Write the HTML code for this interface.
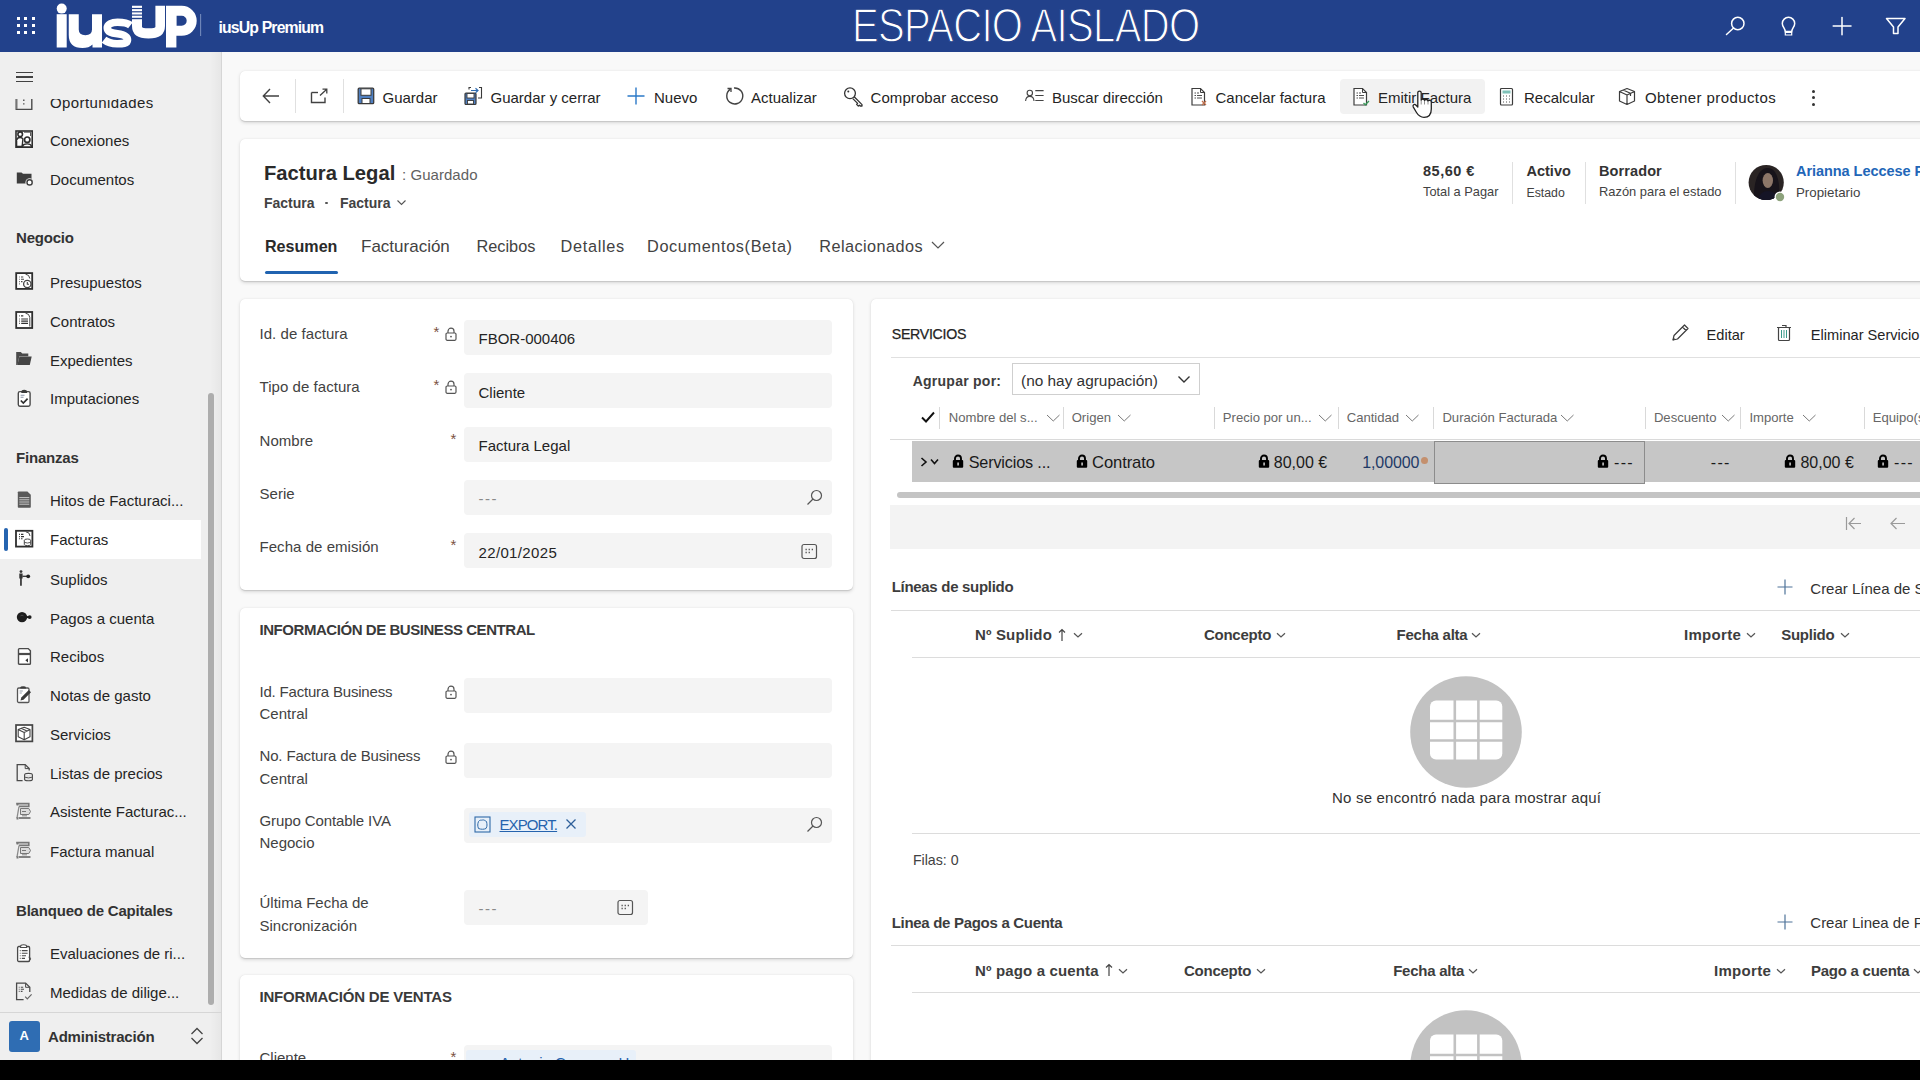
<!DOCTYPE html><html><head><meta charset="utf-8"><style>
*{box-sizing:border-box;margin:0;padding:0}
html,body{width:1920px;height:1080px;overflow:hidden;background:#000;font-family:"Liberation Sans",sans-serif}
#app{position:absolute;left:0;top:0;width:1920px;height:1060px;background:#f9f9f9;overflow:hidden}
.t{position:absolute;white-space:nowrap;line-height:1}
.r{position:absolute}
.s{position:absolute;overflow:visible}
.card{position:absolute;background:#fff;border-radius:5px;box-shadow:0 1.6px 3.6px rgba(0,0,0,.13),0 0.3px 0.9px rgba(0,0,0,.11)}
</style></head><body><div id="app"><div class="r" style="left:0px;top:0px;width:1920px;height:52px;background:#22418b;"></div>
<div class="r" style="left:17.0px;top:17.0px;width:3.2px;height:3.2px;background:#fff;"></div>
<div class="r" style="left:17.0px;top:24.0px;width:3.2px;height:3.2px;background:#fff;"></div>
<div class="r" style="left:17.0px;top:31.0px;width:3.2px;height:3.2px;background:#fff;"></div>
<div class="r" style="left:24.3px;top:17.0px;width:3.2px;height:3.2px;background:#fff;"></div>
<div class="r" style="left:24.3px;top:24.0px;width:3.2px;height:3.2px;background:#fff;"></div>
<div class="r" style="left:24.3px;top:31.0px;width:3.2px;height:3.2px;background:#fff;"></div>
<div class="r" style="left:31.6px;top:17.0px;width:3.2px;height:3.2px;background:#fff;"></div>
<div class="r" style="left:31.6px;top:24.0px;width:3.2px;height:3.2px;background:#fff;"></div>
<div class="r" style="left:31.6px;top:31.0px;width:3.2px;height:3.2px;background:#fff;"></div>
<svg class="s" style="left:50px;top:0px;" width="160" height="52" viewBox="0 0 160 52">
<g transform="translate(-50,0)" fill="#fff">
<rect x="56.7" y="14.2" width="10" height="33.3"/>
<circle cx="61.7" cy="8.6" r="5"/>
<path d="M68.75 14.2H78.75V29.5Q78.75 35.2 85.4 35.2Q92 35.2 92 29.5V14.2H102V47.5H92.5V44.5Q89 48 82.5 48Q68.75 48 68.75 35Z"/>
<path d="M130.5 25.3C127 22.5 122 22.3 117.5 22.3C111.5 22.3 107.3 24.3 107.3 28C107.3 32 111.5 33 117.5 33.8C123.5 34.6 127.5 36 127.5 40C127.5 43.8 122 43.7 117 43.7C112 43.7 107.5 42.5 104 39.8" fill="none" stroke="#fff" stroke-width="7.6"/>
<path d="M132 5.8H142V27Q142 28.3 148.7 28.3Q155.4 28.3 155.4 27V5.8H165V26Q165 38.5 148.5 38.5Q132 38.5 132 26Z"/>
<path fill-rule="evenodd" d="M166 5.8H181.7A15 15 0 0 1 181.7 35.8H176.4V47.5H166ZM176.6 15.8V25.8H181.7A5 5 0 0 0 181.7 15.8Z"/>
</g>
<g transform="translate(-50,0)" fill="#22418b">
<rect x="132" y="7.9" width="10" height="1.2"/>
<rect x="132" y="11.2" width="10" height="1.2"/>
<rect x="132" y="14.5" width="10" height="1.2"/>
<rect x="132" y="17.8" width="10" height="1.4"/>
</g>
<rect x="150.3" y="14" width="0.8" height="22" fill="#8fa3cc"/>
</svg>
<div class="t " style="left:218.5px;top:19.9px;font-size:15.8px;font-weight:700;color:#fff;letter-spacing:-0.85px;">iusUp Premium</div>
<div class="t " style="left:851.5px;top:1.0px;font-size:48.5px;color:#fff;letter-spacing:-0.8px;transform-origin:0 0;transform:scaleX(0.825);-webkit-text-stroke:1.3px #22418b;">ESPACIO AISLADO</div>
<svg class="s" style="left:1720px;top:12px;" width="200" height="30" viewBox="0 0 200 30">
<g transform="translate(-1720,-12)" fill="none" stroke="#fff" stroke-width="1.5" stroke-linecap="round">
<circle cx="1737.8" cy="23.5" r="6.2"/>
<line x1="1733.3" y1="28.3" x2="1726.5" y2="34.5"/>
<path d="M1785.2 31.5C1785.2 28.5 1782.3 26.8 1782.3 23.5A6.2 6.2 0 0 1 1794.7 23.5C1794.7 26.8 1791.8 28.5 1791.8 31.5Z"/>
<path d="M1785.3 32.5H1791.7V35H1785.3Z" stroke-width="1.2"/>
<line x1="1842" y1="17.5" x2="1842" y2="34.8"/>
<line x1="1833.2" y1="26" x2="1851" y2="26"/>
<path d="M1886.5 18.5H1905L1898 27V33.5H1893.5V27Z" stroke-linejoin="round"/>
</g>
</svg>
<div class="r" style="left:0px;top:52px;width:221px;height:1008px;background:#efefef;"></div>
<div class="r" style="left:210px;top:52px;width:11px;height:1008px;background:linear-gradient(to right, rgba(0,0,0,0), rgba(0,0,0,.035));"></div>
<div class="r" style="left:221px;top:52px;width:1px;height:1008px;background:#d6d6d6;"></div>
<div class="r" style="left:15.5px;top:72.0px;width:17.5px;height:1.3px;background:#424242;"></div>
<div class="r" style="left:15.5px;top:76.3px;width:17.5px;height:1.3px;background:#424242;"></div>
<div class="r" style="left:15.5px;top:80.6px;width:17.5px;height:1.3px;background:#424242;"></div>
<div class="r" style="left:0px;top:520px;width:201px;height:39px;background:#ffffff;"></div>
<div class="r" style="left:4px;top:527.5px;width:4px;height:23.5px;background:#2564b0;border-radius:2px;"></div>
<div style="position:absolute;left:0;top:99.2px;width:205px;height:912.8px;overflow:hidden">
<div class="t " style="left:50.0px;top:-4.7px;font-size:15px;color:#242424;letter-spacing:0.4px;">Oportunidades</div>
<svg class="s" style="left:15px;top:0.2999999999999936px;" width="18" height="18" viewBox="0 0 18 18"><path d="M1.2 0V10.4H16.8V0" fill="none" stroke="#4a4a4a" stroke-width="1.4"/><path d="M1.8 0V10" stroke="#777" stroke-width="1.4"/><path d="M8.8 0.6V2M8.8 4.2V5.6" stroke="#444" stroke-width="1.3"/></svg>
<div class="t " style="left:50.0px;top:34.3px;font-size:15px;color:#242424;">Conexiones</div>
<svg class="s" style="left:15px;top:31.30000000000001px;" width="18" height="18" viewBox="0 0 18 18"><rect x="1" y="1" width="16.2" height="16.2" fill="#fff" stroke="#2e2e2e" stroke-width="1.6"/><path d="M1 9.5Q1.5 6.8 5 6.8Q7.5 6.8 8.6 8.5L7.8 17H1Z" fill="#2e2e2e"/><path d="M2.3 15.8V10.2Q3 8.2 5 8.2Q6.5 8.2 7.2 9.2L6.5 15.8Z" fill="#fff"/><circle cx="5.2" cy="4.2" r="2.3" fill="#fff" stroke="#2e2e2e" stroke-width="1.6"/><path d="M6.2 17.2Q6.8 13.2 12.2 13.2Q17.2 13.2 17.2 17.2Z" fill="#2e2e2e"/><path d="M8.2 16.2Q9 14.6 12.2 14.6Q15.2 14.6 15.8 16.2Z" fill="#fff"/><circle cx="12.2" cy="9.7" r="2.7" fill="#fff" stroke="#2e2e2e" stroke-width="1.7"/><path d="M9 2.2H15.5V6" fill="none" stroke="#2e2e2e" stroke-width=".8"/></svg>
<div class="t " style="left:50.0px;top:73.3px;font-size:15px;color:#242424;">Documentos</div>
<svg class="s" style="left:15px;top:70.19999999999999px;" width="18" height="18" viewBox="0 0 18 18"><path d="M1.8 3.6H6.5L8 4.8H16.5V14.6H1.8Z" fill="#3d3d3d"/><circle cx="14.6" cy="13.4" r="4.2" fill="#efefef"/><circle cx="14.6" cy="13.4" r="2.6" fill="#fff" stroke="#3d3d3d" stroke-width="1.4"/></svg>
<div class="t " style="left:16.0px;top:131.3px;font-size:15px;font-weight:700;color:#333;letter-spacing:-0.2px;">Negocio</div>
<div class="t " style="left:50.0px;top:176.3px;font-size:15px;color:#242424;">Presupuestos</div>
<svg class="s" style="left:15px;top:173.0px;" width="18" height="18" viewBox="0 0 18 18"><rect x="1.2" y="1.1" width="16" height="15.8" fill="#fff" stroke="#2e2e2e" stroke-width="1.8"/><path d="M4.3 5H5M4.3 7.3H5M4.3 9.6H5M4.3 11.9H5M6 5H8.3M6 7.3H9M6 9.6H7.5" stroke="#444" stroke-width="1.1"/><path d="M10.5 2.2Q14.5 2.5 14.8 6.5" fill="none" stroke="#444" stroke-width="1"/><circle cx="12.3" cy="12" r="3.7" fill="#fff" stroke="#444" stroke-width="1.3"/><path d="M12.3 10V12.2H14" fill="none" stroke="#444" stroke-width="1.1"/></svg>
<div class="t " style="left:50.0px;top:215.3px;font-size:15px;color:#242424;">Contratos</div>
<svg class="s" style="left:15px;top:212.0px;" width="18" height="18" viewBox="0 0 18 18"><rect x="1.2" y="1" width="16" height="16" fill="#fff" stroke="#2e2e2e" stroke-width="1.8"/><path d="M4.3 4.8H5M6 4.8H8.3M4.3 8H5M4.3 10.2H5M4.3 12.4H5M6.2 8H13M6.2 10.2H13M6.2 12.4H13" stroke="#333" stroke-width="1.2"/><path d="M10.5 2.2Q14.5 2.5 14.8 6.5V15.5" fill="none" stroke="#444" stroke-width="1"/></svg>
<div class="t " style="left:50.0px;top:254.3px;font-size:15px;color:#242424;">Expedientes</div>
<svg class="s" style="left:15px;top:250.8px;" width="18" height="18" viewBox="0 0 18 18"><path d="M1.2 2.1H5.8L7.3 3.5H13.3V6.2H4.3L2.6 15.1H1.2Z" fill="#4a4a4a"/><path d="M4.4 6.5H16.7L14.8 15.1H2.4Z" fill="#454545"/></svg>
<div class="t " style="left:50.0px;top:292.3px;font-size:15px;color:#242424;">Imputaciones</div>
<svg class="s" style="left:15px;top:289.5px;" width="18" height="18" viewBox="0 0 18 18"><rect x="3.3" y="2.6" width="11.8" height="14.6" rx="1.6" fill="#fff" stroke="#4a4a4a" stroke-width="1.4"/><path d="M6.3 4V2.8Q6.3 0.8 9.2 0.8Q12.1 0.8 12.1 2.8V4Z" fill="#3a3a3a"/><path d="M5.6 6.3H9.5M5.6 8.2H8.5" stroke="#8d97aa" stroke-width="1.1"/><path d="M5.8 11.5L8.3 14L12.6 9.6" fill="none" stroke="#2e2e2e" stroke-width="1.7"/></svg>
<div class="t " style="left:16.0px;top:351.3px;font-size:15px;font-weight:700;color:#333;letter-spacing:-0.2px;">Finanzas</div>
<div class="t " style="left:50.0px;top:394.3px;font-size:15px;color:#242424;">Hitos de Facturaci...</div>
<svg class="s" style="left:15px;top:391.3px;" width="18" height="18" viewBox="0 0 18 18"><path d="M2.8 2.2Q2.8 1.4 3.6 1.4H12.4L15.8 4.8V16.9Q15.8 17.7 15 17.7H3.6Q2.8 17.7 2.8 16.9Z" fill="#5a5a5a"/><path d="M4.3 7.6H14.3M4.3 9.8H14.3M4.3 12H14.3M4.3 14.2H14.3" stroke="#c8c8c8" stroke-width="1"/></svg>
<div class="t " style="left:50.0px;top:433.3px;font-size:15px;color:#242424;">Facturas</div>
<svg class="s" style="left:15px;top:430.20000000000005px;" width="18" height="18" viewBox="0 0 18 18"><rect x="1" y="1.8" width="16.4" height="15.8" fill="#fff" stroke="#2e2e2e" stroke-width="1.8"/><path d="M4 5.4H4.9M4 7.6H4.9M4 9.8H4.9M6 5.4H8.4M6 7.6H9M6 9.8H7.5" stroke="#333" stroke-width="1.1"/><path d="M10.8 2.8Q14.8 3 15 7" fill="none" stroke="#444" stroke-width="1"/><ellipse cx="12.5" cy="11.3" rx="3.2" ry="1.3" fill="#fff" stroke="#444" stroke-width="1"/><path d="M9.3 11.3V15.4Q9.3 16.6 12.5 16.6Q15.7 16.6 15.7 15.4V11.3" fill="#fff" stroke="#444" stroke-width="1"/><path d="M9.5 13.4Q12.5 14.6 15.5 13.4" fill="none" stroke="#444" stroke-width=".9"/></svg>
<div class="t " style="left:50.0px;top:473.3px;font-size:15px;color:#242424;">Suplidos</div>
<svg class="s" style="left:15px;top:470.0px;" width="18" height="18" viewBox="0 0 18 18"><circle cx="6" cy="2.6" r="1.4" fill="#333"/><path d="M4.3 4.6H7.6V9.5H6.8V16.8H5.1V9.5H4.3Z" fill="#333"/><path d="M7.4 7.3H12" stroke="#333" stroke-width="1.3"/><circle cx="13.2" cy="7.3" r="1.9" fill="#222"/></svg>
<div class="t " style="left:50.0px;top:512.3px;font-size:15px;color:#242424;">Pagos a cuenta</div>
<svg class="s" style="left:15px;top:508.79999999999995px;" width="18" height="18" viewBox="0 0 18 18"><circle cx="7" cy="9.1" r="5.2" fill="#1e1e1e"/><rect x="10" y="8.1" width="4" height="2" fill="#1e1e1e"/><circle cx="14.7" cy="9.1" r="1.9" fill="#1e1e1e"/><path d="M5.5 7.8Q7 6.5 8.5 7.8" fill="none" stroke="#555" stroke-width=".8"/></svg>
<div class="t " style="left:50.0px;top:550.3px;font-size:15px;color:#242424;">Recibos</div>
<svg class="s" style="left:15px;top:547.5px;" width="18" height="18" viewBox="0 0 18 18"><path d="M3.5 2.5Q3.5 1.6 4.4 1.6H13.2L15.4 3.8V16.4Q15.4 17.2 14.5 17.2H4.4Q3.5 17.2 3.5 16.4Z" fill="#fff" stroke="#4a4a4a" stroke-width="1.4"/><path d="M3.8 7H15.2" stroke="#4a4a4a" stroke-width="2.2"/><path d="M13 11.2L10.3 13.3L13 15.4Z" fill="#333"/></svg>
<div class="t " style="left:50.0px;top:589.3px;font-size:15px;color:#242424;">Notas de gasto</div>
<svg class="s" style="left:15px;top:586.3px;" width="18" height="18" viewBox="0 0 18 18"><rect x="2.5" y="3" width="11.5" height="14.5" rx="1.3" fill="#fff" stroke="#555" stroke-width="1.3"/><path d="M5.3 3.6V2.6Q5.3 1.2 8.2 1.2Q11 1.2 11 2.6V3.6Z" fill="#3a3a3a"/><path d="M4.6 6H7.8M4.6 8H6.8" stroke="#9aa1ad" stroke-width="1.1"/><path d="M5.5 15.5L6.3 12.5L13.8 5L16 7.2L8.5 14.7Z" fill="#3a3a3a"/></svg>
<div class="t " style="left:50.0px;top:628.3px;font-size:15px;color:#242424;">Servicios</div>
<svg class="s" style="left:15px;top:625.0px;" width="18" height="18" viewBox="0 0 18 18"><rect x="1" y="1" width="16.4" height="16.4" fill="#fff" stroke="#444" stroke-width="1.7"/><path d="M9.2 3.2L15 5.6V12.8L9.2 15.8L3.2 12.8V5.6Z M3.2 5.6L9.2 8.4L15 5.6 M9.2 8.4V15.8 M6 4.2L12 7" fill="none" stroke="#444" stroke-width="1.1" stroke-linejoin="round"/></svg>
<div class="t " style="left:50.0px;top:667.3px;font-size:15px;color:#242424;">Listas de precios</div>
<svg class="s" style="left:15px;top:663.8px;" width="18" height="18" viewBox="0 0 18 18"><path d="M7.6 17.6H2.2V1.6H10.2L14.2 5.6V7.6" fill="none" stroke="#4a4a4a" stroke-width="1.3"/><path d="M10.2 1.8V5.6H14" fill="none" stroke="#4a4a4a" stroke-width="1"/><ellipse cx="13.5" cy="12" rx="3.9" ry="1.6" fill="#fff" stroke="#4a4a4a" stroke-width="1.1"/><path d="M9.6 12V16.5Q9.6 17.8 13.5 17.8Q17.4 17.8 17.4 16.5V12" fill="#e4e4e4" stroke="#4a4a4a" stroke-width="1.1"/><path d="M9.8 14.2Q13.5 15.6 17.2 14.2" fill="none" stroke="#4a4a4a" stroke-width=".9"/></svg>
<div class="t " style="left:50.0px;top:705.3px;font-size:15px;color:#242424;">Asistente Facturac...</div>
<svg class="s" style="left:15px;top:702.5px;" width="18" height="18" viewBox="0 0 18 18"><path d="M1.2 1.6H13.8V4.4H4" fill="none" stroke="#777" stroke-width="1.6"/><path d="M1.5 1.5H3.5V3.5H1.5Z M1.5 15H3.5V17.5H1.5Z" fill="#777"/><path d="M4 4.5L2 16" fill="none" stroke="#8a8a8a" stroke-width="1.3"/><path d="M5.5 6.5H13.8L15.5 9.5L13.8 12.5H5.5Z" fill="#ddd" stroke="#777" stroke-width="1"/><path d="M7 9.5H11" stroke="#777" stroke-width="1"/><path d="M4 16H15.5" stroke="#777" stroke-width="1.8"/><path d="M7 13.8H12" stroke="#888" stroke-width="1"/></svg>
<div class="t " style="left:50.0px;top:745.3px;font-size:15px;color:#242424;">Factura manual</div>
<svg class="s" style="left:15px;top:742.0px;" width="18" height="18" viewBox="0 0 18 18"><path d="M1.2 1.6H13.8V4.4H4" fill="none" stroke="#777" stroke-width="1.6"/><path d="M1.5 1.5H3.5V3.5H1.5Z M1.5 15H3.5V17.5H1.5Z" fill="#777"/><path d="M4 4.5L2 16" fill="none" stroke="#8a8a8a" stroke-width="1.3"/><path d="M5.5 6.5H13.8L15.5 9.5L13.8 12.5H5.5Z" fill="#ddd" stroke="#777" stroke-width="1"/><path d="M7 9.5H11" stroke="#777" stroke-width="1"/><path d="M4 16H15.5" stroke="#777" stroke-width="1.8"/><path d="M7 13.8H12" stroke="#888" stroke-width="1"/></svg>
<div class="t " style="left:16.0px;top:804.3px;font-size:15px;font-weight:700;color:#333;letter-spacing:-0.2px;">Blanqueo de Capitales</div>
<div class="t " style="left:50.0px;top:847.3px;font-size:15px;color:#242424;">Evaluaciones de ri...</div>
<svg class="s" style="left:15px;top:844.5px;" width="18" height="18" viewBox="0 0 18 18"><rect x="2.6" y="2.5" width="12" height="15" rx="1.2" fill="#fff" stroke="#4a4a4a" stroke-width="1.3"/><path d="M5.6 3.5V2.3Q5.6 0.7 8.6 0.7Q11.6 0.7 11.6 2.3V3.5Z" fill="#fff" stroke="#4a4a4a" stroke-width="1.1"/><path d="M4.8 6.6H5.6M4.8 9.2H5.6M4.8 11.8H5.6M4.8 14.4H5.6M6.8 6.6H12.6M6.8 9.2H12.6M6.8 11.8H11M6.8 14.4H10" stroke="#4a4a4a" stroke-width="1.1"/><path d="M13.6 13.2Q15.6 13.2 15.6 14.8Q15.6 16 14.2 16.3V17.2" fill="none" stroke="#4a4a4a" stroke-width="1"/></svg>
<div class="t " style="left:50.0px;top:886.3px;font-size:15px;color:#242424;">Medidas de dilige...</div>
<svg class="s" style="left:15px;top:883.3px;" width="18" height="18" viewBox="0 0 18 18"><path d="M8.6 17.6H1.6V1.1H10.6L14.8 5.3V10" fill="none" stroke="#4a4a4a" stroke-width="1.3"/><path d="M10.6 1.3V5.3H14.6" fill="none" stroke="#4a4a4a" stroke-width="1"/><path d="M3.8 5.2H4.6M3.8 7.3H4.6M3.8 9.4H4.6M5.8 5.2H8.2M5.8 7.3H9M5.8 9.4H7.5" stroke="#4a4a4a" stroke-width="1.1"/><path d="M10.2 14.6L12.3 16.8L16.6 12.4" fill="none" stroke="#666" stroke-width="1.2"/></svg>
</div>
<div class="r" style="left:208px;top:392.5px;width:6px;height:612px;background:#adadad;border-radius:3px;"></div>
<div class="r" style="left:0px;top:1012px;width:221px;height:1px;background:#d6d6d6;"></div>
<div class="r" style="left:9px;top:1021px;width:31px;height:31px;background:#2f6db3;border-radius:3px;"></div>
<div class="t " style="left:19.6px;top:1029.3px;font-size:13px;font-weight:700;color:#fff;">A</div>
<div class="t " style="left:48.0px;top:1029.3px;font-size:15px;font-weight:700;color:#333;letter-spacing:-0.2px;">Administración</div>
<svg class="s" style="left:190px;top:1027px;" width="14" height="18" viewBox="0 0 14 18"><path d="M1.5 7L7 1.5L12.5 7M1.5 11L7 16.5L12.5 11" fill="none" stroke="#444" stroke-width="1.3"/></svg>
<div class="card" style="left:240px;top:71px;width:1700px;height:50px;"></div>
<div class="r" style="left:295px;top:79px;width:1px;height:34px;background:#e0e0e0;"></div>
<div class="r" style="left:343px;top:79px;width:1px;height:34px;background:#e0e0e0;"></div>
<div class="r" style="left:1340px;top:79px;width:145px;height:35px;background:#f2f2f2;border-radius:4px;"></div>
<svg class="s" style="left:260px;top:86px;" width="22" height="20" viewBox="0 0 22 20"><path d="M3.5 10H19M10 3L3.3 10L10 17" fill="none" stroke="#424242" stroke-width="1.4"/></svg>
<svg class="s" style="left:308px;top:86px;" width="22" height="20" viewBox="0 0 22 20"><path d="M3.5 6.5V16.5H17V11.5" fill="none" stroke="#424242" stroke-width="1.4"/><path d="M12 9.5L18.5 3.5M14.5 3.2H18.8V7.5" fill="none" stroke="#424242" stroke-width="1.3"/><path d="M3.5 6.5H10" stroke="#424242" stroke-width="1.4"/></svg>
<svg class="s" style="left:357px;top:87px;" width="18" height="18" viewBox="0 0 18 18"><rect x="1.2" y="1.2" width="15.5" height="15.5" rx="1" fill="#4f7fc0" stroke="#3a3a3a" stroke-width="1.3"/><rect x="4" y="1.8" width="10" height="6.5" fill="#fff" stroke="#3a3a3a" stroke-width="1"/><rect x="5" y="11.5" width="8" height="5" fill="#fff" stroke="#3a3a3a" stroke-width="1"/></svg>
<div class="t " style="left:382.5px;top:90.3px;font-size:15px;color:#242424;">Guardar</div>
<svg class="s" style="left:463px;top:86px;" width="20" height="20" viewBox="0 0 20 20"><rect x="2" y="7" width="11" height="11.5" rx="1" fill="#4f7fc0" stroke="#3a3a3a" stroke-width="1.2"/><rect x="4" y="7.5" width="7" height="4.5" fill="#fff" stroke="#3a3a3a" stroke-width=".9"/><rect x="4.5" y="14.5" width="6" height="3.5" fill="#fff" stroke="#3a3a3a" stroke-width=".9"/><path d="M6 3.5V1.5H8M16 1.5H18.5V12H15" fill="none" stroke="#3a3a3a" stroke-width="1.1"/><path d="M8 4.5H15M12.5 2.2L15 4.5L12.5 6.8" fill="none" stroke="#2f6db3" stroke-width="1.2"/></svg>
<div class="t " style="left:490.5px;top:90.3px;font-size:15px;color:#242424;">Guardar y cerrar</div>
<svg class="s" style="left:626px;top:86px;" width="20" height="20" viewBox="0 0 20 20"><path d="M10 1.5V18.5M1.5 10H18.5" stroke="#2b79c8" stroke-width="1.4"/></svg>
<div class="t " style="left:654.0px;top:90.3px;font-size:15px;color:#242424;">Nuevo</div>
<svg class="s" style="left:724px;top:86px;" width="20" height="20" viewBox="0 0 20 20"><path d="M6.5 3.2A8 8 0 1 0 10 2" fill="none" stroke="#424242" stroke-width="1.4"/><path d="M3.5 2.5H7V6" fill="none" stroke="#424242" stroke-width="1.3"/></svg>
<div class="t " style="left:751.0px;top:90.3px;font-size:15px;color:#242424;">Actualizar</div>
<svg class="s" style="left:843px;top:86px;" width="22" height="22" viewBox="0 0 22 22"><circle cx="7" cy="7.3" r="5.4" fill="none" stroke="#333" stroke-width="1.3"/><circle cx="5.3" cy="5.5" r="1" fill="#333"/><path d="M11.2 10.8L19 18.6V20H17.2L16.3 19.1L15.3 20.1L13.6 18.4L14.6 17.4L9.8 12.6" fill="none" stroke="#333" stroke-width="1.3" stroke-linejoin="round"/></svg>
<div class="t " style="left:870.5px;top:90.3px;font-size:15px;color:#242424;letter-spacing:0.08px;">Comprobar acceso</div>
<svg class="s" style="left:1024px;top:88px;" width="22" height="16" viewBox="0 0 22 16"><circle cx="5.8" cy="5" r="2.7" fill="none" stroke="#444" stroke-width="1.1"/><path d="M1.6 13C1.8 9.8 3.6 8.4 5.8 8.4S9.8 9.8 10 13" fill="none" stroke="#444" stroke-width="1.1"/><path d="M11.3 2.6H19.6M11.3 7.5H19.6M11.3 12.5H19.6" stroke="#444" stroke-width="1.1"/></svg>
<div class="t " style="left:1052.0px;top:90.3px;font-size:15px;color:#242424;">Buscar dirección</div>
<svg class="s" style="left:1190px;top:87px;" width="18" height="20" viewBox="0 0 18 20"><path d="M2 1.5H10.5L14.5 5.5V18H2Z" fill="#fff" stroke="#3c3c3c" stroke-width="1.2"/><path d="M10.5 1.5V5.5H14.5" fill="none" stroke="#3c3c3c" stroke-width="1"/><path d="M4.5 6H6M4.5 8.5H6M4.5 11H6M7 6H9M7 8.5H12M7 11H12" stroke="#3c3c3c" stroke-width=".9"/><path d="M12 14L16 18M16 14L12 18" stroke="#c0704d" stroke-width="1.3"/></svg>
<div class="t " style="left:1215.5px;top:90.3px;font-size:15px;color:#242424;">Cancelar factura</div>
<svg class="s" style="left:1352px;top:87px;" width="18" height="20" viewBox="0 0 18 20"><path d="M2 1.5H10.5L14.5 5.5V18H2Z" fill="#fff" stroke="#3c3c3c" stroke-width="1.2"/><path d="M10.5 1.5V5.5H14.5" fill="none" stroke="#3c3c3c" stroke-width="1"/><path d="M4.5 6H6M4.5 8.5H6M4.5 11H6M7 6H9M7 8.5H12M7 11H12" stroke="#3c3c3c" stroke-width=".9"/><path d="M11.5 16L13.3 17.8L17 14" fill="none" stroke="#3a9a5a" stroke-width="1.3"/></svg>
<div class="t " style="left:1378.0px;top:90.3px;font-size:15px;color:#242424;">Emitir Factura</div>
<svg class="s" style="left:1498px;top:87px;" width="18" height="20" viewBox="0 0 18 20"><rect x="2.5" y="1.5" width="12" height="16.5" rx="1" fill="#fff" stroke="#3c3c3c" stroke-width="1.2"/><rect x="4.5" y="3.5" width="8" height="3" fill="#7fc1b8"/><path d="M5 9h1M8 9h1M11 9h1M5 12h1M8 12h1M11 12h1M5 15h1M8 15h1M11 15h1" stroke="#555" stroke-width="1.2"/></svg>
<div class="t " style="left:1524.0px;top:90.3px;font-size:15px;color:#242424;">Recalcular</div>
<svg class="s" style="left:1617px;top:87px;" width="22" height="20" viewBox="0 0 22 20"><path d="M10 1.5L17.5 4.5V14L10 17.5L2.5 14V4.5Z M2.5 4.5L10 8L17.5 4.5 M10 8V17.5 M6 3L13.5 6.3V9" fill="none" stroke="#3c3c3c" stroke-width="1.2" stroke-linejoin="round"/></svg>
<div class="t " style="left:1645.0px;top:90.3px;font-size:15px;color:#242424;letter-spacing:0.4px;">Obtener productos</div>
<div class="r" style="left:1812px;top:89.5px;width:3px;height:3px;border-radius:50%;background:#333"></div>
<div class="r" style="left:1812px;top:96.0px;width:3px;height:3px;border-radius:50%;background:#333"></div>
<div class="r" style="left:1812px;top:102.5px;width:3px;height:3px;border-radius:50%;background:#333"></div>
<svg class="s" style="left:1409.5px;top:89px;" width="26" height="32" viewBox="0 0 26 32"><path d="M7.8 13.5V3.8C7.8 1.6 11.2 1.6 11.2 3.8V11.2C11.6 9.8 14.2 9.8 14.5 11.5C15 10 17.6 10.2 18 12C18.6 10.8 21.3 11 21.3 13V20C21.3 25 18.8 28.3 14 28.3C10.5 28.3 8.5 26.8 6.5 23.5L3.2 17.8C2.5 16.3 4.3 14.6 5.8 16L7.8 18Z" fill="#fff" stroke="#222" stroke-width="1.3" stroke-linejoin="round"/><path d="M11.2 11.5V15.5M14.5 11.8V15.5M18 12.3V15.5" stroke="#777" stroke-width=".8"/></svg>
<div class="card" style="left:240px;top:139px;width:1700px;height:142px;"></div>
<div class="t " style="left:264.0px;top:163.2px;font-size:20.2px;font-weight:700;color:#2a2a2a;">Factura Legal</div>
<div class="t " style="left:402.0px;top:167.3px;font-size:15px;color:#616161;letter-spacing:0.05px;">: Guardado</div>
<div class="t " style="left:264.0px;top:196.3px;font-size:14px;font-weight:700;color:#424242;">Factura</div>
<div class="r" style="left:325px;top:201.5px;width:2.5px;height:2.5px;border-radius:50%;background:#555"></div>
<div class="t " style="left:340.0px;top:196.3px;font-size:14px;font-weight:700;color:#424242;">Factura</div>
<svg class="s" style="left:396px;top:199px;" width="12" height="8" viewBox="0 0 12 8"><path d="M1.5 1.5L5.5 5.5L9.5 1.5" fill="none" stroke="#555" stroke-width="1.1"/></svg>
<div class="t " style="left:265.0px;top:238.2px;font-size:16.1px;font-weight:700;color:#2a2a2a;">Resumen</div>
<div class="r" style="left:265px;top:271px;width:73px;height:3px;background:#2063b0;border-radius:1.5px;"></div>
<div class="t " style="left:361.0px;top:238.3px;font-size:17px;color:#424242;">Facturación</div>
<div class="t " style="left:476.5px;top:238.2px;font-size:16.3px;color:#424242;">Recibos</div>
<div class="t " style="left:560.5px;top:238.2px;font-size:16.3px;color:#424242;letter-spacing:0.7px;">Detalles</div>
<div class="t " style="left:647.0px;top:238.2px;font-size:16.3px;color:#424242;letter-spacing:0.62px;">Documentos(Beta)</div>
<div class="t " style="left:819.3px;top:238.2px;font-size:16.3px;color:#424242;letter-spacing:0.42px;">Relacionados</div>
<svg class="s" style="left:930px;top:240px;" width="16" height="10" viewBox="0 0 16 10"><path d="M2 2L8 8L14 2" fill="none" stroke="#555" stroke-width="1.2"/></svg>
<div class="t " style="left:1423.0px;top:164.1px;font-size:14.5px;font-weight:700;color:#333;letter-spacing:0.5px;">85,60 €</div>
<div class="t " style="left:1423.0px;top:186.4px;font-size:12.8px;color:#424242;">Total a Pagar</div>
<div class="r" style="left:1512px;top:162px;width:1px;height:42px;background:#e0e0e0;"></div>
<div class="t " style="left:1526.5px;top:164.1px;font-size:14.5px;font-weight:700;color:#333;">Activo</div>
<div class="t " style="left:1526.5px;top:187.2px;font-size:12.3px;color:#424242;">Estado</div>
<div class="r" style="left:1584.5px;top:162px;width:1px;height:42px;background:#e0e0e0;"></div>
<div class="t " style="left:1599.0px;top:164.1px;font-size:14.5px;font-weight:700;color:#333;letter-spacing:0.1px;">Borrador</div>
<div class="t " style="left:1599.0px;top:186.4px;font-size:12.9px;color:#424242;">Razón para el estado</div>
<div class="r" style="left:1735px;top:162px;width:1px;height:42px;background:#e0e0e0;"></div>
<svg class="s" style="left:1748px;top:164px;" width="40" height="40" viewBox="0 0 40 40"><defs><clipPath id="avc"><circle cx="18.2" cy="18.5" r="17.6"/></clipPath></defs><g clip-path="url(#avc)"><rect width="40" height="40" fill="#2a2424"/><path d="M6 40C5 20 9 5 19 4S33 18 31 40Z" fill="#17131a"/><ellipse cx="19.8" cy="16.5" rx="5.2" ry="7.5" fill="#8c7668"/><path d="M9 40C10 31 14 27 20 27S30 31 31 40Z" fill="#151426"/></g><circle cx="32" cy="33" r="5.5" fill="#fff"/><circle cx="32" cy="33" r="4.2" fill="#8da27c"/></svg>
<div class="t " style="left:1796.0px;top:164.1px;font-size:14.5px;font-weight:700;color:#2266b8;letter-spacing:-0.05px;">Arianna Leccese P</div>
<div class="t " style="left:1796.0px;top:186.2px;font-size:13.3px;color:#424242;">Propietario</div>
<div class="card" style="left:240px;top:299px;width:613px;height:291px;"></div>
<div class="card" style="left:240px;top:608px;width:613px;height:349.5px;"></div>
<div class="card" style="left:240px;top:975px;width:613px;height:200px;"></div>
<div class="t " style="left:259.5px;top:326.3px;font-size:15px;color:#424242;letter-spacing:0.05px;">Id. de factura</div>
<div class="r" style="left:464px;top:320px;width:368px;height:35px;background:#f4f4f4;border-radius:4px;"></div>
<div class="t " style="left:433.5px;top:324.3px;font-size:15px;color:#7a5040;">*</div>
<svg class="s" style="left:445px;top:327px;" width="12" height="14" viewBox="0 0 12 14"><path d="M3 6V4.2A3 3 0 0 1 9 4.2V6" fill="none" stroke="#555" stroke-width="1.2"/><rect x="1" y="6" width="10" height="7.3" rx="1.2" fill="none" stroke="#555" stroke-width="1.2"/><circle cx="6" cy="9.6" r="0.9" fill="#555"/></svg>
<div class="t " style="left:478.5px;top:331.3px;font-size:15px;color:#242424;">FBOR-000406</div>
<div class="t " style="left:259.5px;top:379.3px;font-size:15px;color:#424242;letter-spacing:0.05px;">Tipo de factura</div>
<div class="r" style="left:464px;top:373.4px;width:368px;height:35px;background:#f4f4f4;border-radius:4px;"></div>
<div class="t " style="left:433.5px;top:377.3px;font-size:15px;color:#7a5040;">*</div>
<svg class="s" style="left:445px;top:380.4px;" width="12" height="14" viewBox="0 0 12 14"><path d="M3 6V4.2A3 3 0 0 1 9 4.2V6" fill="none" stroke="#555" stroke-width="1.2"/><rect x="1" y="6" width="10" height="7.3" rx="1.2" fill="none" stroke="#555" stroke-width="1.2"/><circle cx="6" cy="9.6" r="0.9" fill="#555"/></svg>
<div class="t " style="left:478.5px;top:385.3px;font-size:15px;color:#242424;">Cliente</div>
<div class="t " style="left:259.5px;top:433.3px;font-size:15px;color:#424242;letter-spacing:0.05px;">Nombre</div>
<div class="r" style="left:464px;top:426.7px;width:368px;height:35px;background:#f4f4f4;border-radius:4px;"></div>
<div class="t " style="left:450.5px;top:431.3px;font-size:15px;color:#7a5040;">*</div>
<div class="t " style="left:478.5px;top:438.3px;font-size:15px;color:#242424;">Factura Legal</div>
<div class="t " style="left:259.5px;top:486.3px;font-size:15px;color:#424242;letter-spacing:0.05px;">Serie</div>
<div class="r" style="left:464px;top:480px;width:368px;height:35px;background:#f4f4f4;border-radius:4px;"></div>
<div class="t " style="left:478.5px;top:491.3px;font-size:15px;color:#8a8a8a;letter-spacing:1.5px;">---</div>
<div class="t " style="left:259.5px;top:539.3px;font-size:15px;color:#424242;letter-spacing:0.05px;">Fecha de emisión</div>
<div class="r" style="left:464px;top:533.4px;width:368px;height:35px;background:#f4f4f4;border-radius:4px;"></div>
<div class="t " style="left:450.5px;top:537.3px;font-size:15px;color:#7a5040;">*</div>
<div class="t " style="left:478.5px;top:545.3px;font-size:15px;color:#242424;letter-spacing:0.35px;">22/01/2025</div>
<svg class="s" style="left:806px;top:489px;" width="18" height="18" viewBox="0 0 18 18"><circle cx="10.5" cy="6.5" r="5" fill="none" stroke="#555" stroke-width="1.2"/><path d="M7 10L1.5 15.5" stroke="#555" stroke-width="1.2"/></svg>
<svg class="s" style="left:800.5px;top:543px;" width="17" height="17" viewBox="0 0 17 17"><rect x="1" y="1.5" width="14.5" height="14" rx="2" fill="none" stroke="#555" stroke-width="1.2"/><path d="M4.5 6.5h1.3M7.6 6.5h1.3M10.7 6.5h1.3M4.5 9.5h1.3M7.6 9.5h1.3" stroke="#555" stroke-width="1.4"/></svg>
<div class="t " style="left:259.5px;top:622.3px;font-size:15px;font-weight:700;color:#3a3a3a;letter-spacing:-0.45px;">INFORMACIÓN DE BUSINESS CENTRAL</div>
<div class="t " style="left:259.5px;top:684.3px;font-size:15px;color:#424242;letter-spacing:-0.2px;">Id. Factura Business</div>
<div class="t " style="left:259.5px;top:706.3px;font-size:15px;color:#424242;">Central</div>
<svg class="s" style="left:445px;top:685px;" width="12" height="14" viewBox="0 0 12 14"><path d="M3 6V4.2A3 3 0 0 1 9 4.2V6" fill="none" stroke="#555" stroke-width="1.2"/><rect x="1" y="6" width="10" height="7.3" rx="1.2" fill="none" stroke="#555" stroke-width="1.2"/><circle cx="6" cy="9.6" r="0.9" fill="#555"/></svg>
<div class="r" style="left:464px;top:678.2px;width:368px;height:35px;background:#f4f4f4;border-radius:4px;"></div>
<div class="t " style="left:259.5px;top:748.3px;font-size:15px;color:#424242;letter-spacing:-0.15px;">No. Factura de Business</div>
<div class="t " style="left:259.5px;top:771.3px;font-size:15px;color:#424242;">Central</div>
<svg class="s" style="left:445px;top:749.5px;" width="12" height="14" viewBox="0 0 12 14"><path d="M3 6V4.2A3 3 0 0 1 9 4.2V6" fill="none" stroke="#555" stroke-width="1.2"/><rect x="1" y="6" width="10" height="7.3" rx="1.2" fill="none" stroke="#555" stroke-width="1.2"/><circle cx="6" cy="9.6" r="0.9" fill="#555"/></svg>
<div class="r" style="left:464px;top:742.5px;width:368px;height:35px;background:#f4f4f4;border-radius:4px;"></div>
<div class="t " style="left:259.5px;top:813.3px;font-size:15px;color:#424242;letter-spacing:-0.1px;">Grupo Contable IVA</div>
<div class="t " style="left:259.5px;top:835.3px;font-size:15px;color:#424242;">Negocio</div>
<div class="r" style="left:464px;top:807.5px;width:368px;height:35px;background:#f4f4f4;border-radius:4px;"></div>
<div class="r" style="left:469px;top:812px;width:117px;height:25px;background:#e8f0f9;border-radius:3px;"></div>
<svg class="s" style="left:474px;top:816px;" width="17" height="17" viewBox="0 0 17 17"><rect x="1" y="1" width="15" height="15" fill="none" stroke="#2f6aa8" stroke-width="1.1"/><path d="M4.5 5.5C6 3.5 7 4.5 8.5 4S11.5 5 12.5 5.5C13 8 13.5 10 12 12.5C10 13.5 7 13.5 4.5 12.5C3.5 10 3.5 8 4.5 5.5Z" fill="none" stroke="#2f6aa8" stroke-width="1"/></svg>
<div class="t " style="left:499.5px;top:817.3px;font-size:15px;color:#2563ad;letter-spacing:-0.9px;text-decoration:underline;">EXPORT.</div>
<svg class="s" style="left:565px;top:818px;" width="12" height="12" viewBox="0 0 12 12"><path d="M1.5 1.5L10.5 10.5M10.5 1.5L1.5 10.5" stroke="#2d5f9a" stroke-width="1.3"/></svg>
<svg class="s" style="left:806px;top:816px;" width="18" height="18" viewBox="0 0 18 18"><circle cx="10.5" cy="6.5" r="5" fill="none" stroke="#555" stroke-width="1.2"/><path d="M7 10L1.5 15.5" stroke="#555" stroke-width="1.2"/></svg>
<div class="t " style="left:259.5px;top:895.3px;font-size:15px;color:#424242;">Última Fecha de</div>
<div class="t " style="left:259.5px;top:918.3px;font-size:15px;color:#424242;">Sincronización</div>
<div class="r" style="left:464px;top:890px;width:184px;height:34.5px;background:#f4f4f4;border-radius:4px;"></div>
<div class="t " style="left:478.5px;top:901.3px;font-size:15px;color:#8a8a8a;letter-spacing:1.5px;">---</div>
<svg class="s" style="left:616.5px;top:899px;" width="17" height="17" viewBox="0 0 17 17"><rect x="1" y="1.5" width="14.5" height="14" rx="2" fill="none" stroke="#555" stroke-width="1.2"/><path d="M4.5 6.5h1.3M7.6 6.5h1.3M10.7 6.5h1.3M4.5 9.5h1.3M7.6 9.5h1.3" stroke="#555" stroke-width="1.4"/></svg>
<div class="t " style="left:259.5px;top:989.3px;font-size:15px;font-weight:700;color:#3a3a3a;letter-spacing:-0.2px;">INFORMACIÓN DE VENTAS</div>
<div class="t " style="left:259.5px;top:1050.3px;font-size:15px;color:#424242;">Cliente</div>
<div class="t " style="left:450.5px;top:1049.3px;font-size:15px;color:#7a5040;">*</div>
<div class="r" style="left:464px;top:1045px;width:368px;height:35px;background:#f4f4f4;border-radius:4px;"></div>
<div class="r" style="left:466px;top:1050px;width:170px;height:25px;background:#e8f0f9;border-radius:3px;"></div>
<div class="t " style="left:500.0px;top:1055.3px;font-size:15px;color:#2563ad;">Antonio Canovas H</div>
<div class="card" style="left:871px;top:299px;width:1100px;height:900px;"></div>
<div class="t " style="left:891.8px;top:327.2px;font-size:14.2px;color:#242424;letter-spacing:-0.3px;-webkit-text-stroke:0.25px #242424;">SERVICIOS</div>
<svg class="s" style="left:1670px;top:323px;" width="20" height="20" viewBox="0 0 20 20"><path d="M3 17L4 12.5L14.5 2L18 5.5L7.5 16Z M12.5 4L16 7.5" fill="none" stroke="#3c3c3c" stroke-width="1.2" stroke-linejoin="round"/><path d="M3 17L4.5 15.5" stroke="#3c3c3c" stroke-width="1.2"/></svg>
<div class="t " style="left:1706.6px;top:328.0px;font-size:14.6px;color:#242424;">Editar</div>
<svg class="s" style="left:1776px;top:324px;" width="16" height="18" viewBox="0 0 16 18"><rect x="2.5" y="3.5" width="11" height="13" rx="1" fill="#fff" stroke="#444" stroke-width="1.2"/><path d="M1 3.5H15M6 1.5H10V3.5" fill="none" stroke="#444" stroke-width="1.2"/><path d="M5.5 6V14M8 6V14M10.5 6V14" stroke="#3a9a8a" stroke-width="1"/></svg>
<div class="t " style="left:1810.8px;top:328.0px;font-size:14.6px;color:#242424;">Eliminar Servicio</div>
<div class="r" style="left:891px;top:357px;width:1100px;height:1px;background:#e0e0e0;"></div>
<div class="t " style="left:912.7px;top:374.3px;font-size:14px;font-weight:700;color:#3d3d3d;letter-spacing:0.25px;">Agrupar por:</div>
<div class="r" style="left:1011.5px;top:362.5px;width:188.5px;height:32.5px;border:1px solid #cfcfcf;background:#fff"></div>
<div class="t " style="left:1021.0px;top:373.1px;font-size:15.4px;color:#323232;">(no hay agrupación)</div>
<svg class="s" style="left:1177px;top:375px;" width="14" height="9" viewBox="0 0 14 9"><path d="M1.5 1.5L7 7L12.5 1.5" fill="none" stroke="#333" stroke-width="1.4"/></svg>
<svg class="s" style="left:920px;top:409px;" width="16" height="16" viewBox="0 0 16 16"><path d="M2 8.5L6 12.5L14 3.5" fill="none" stroke="#111" stroke-width="1.9"/></svg>
<div class="r" style="left:939.3px;top:407px;width:1.2px;height:22px;background:#d9d9d9;"></div>
<div class="r" style="left:1062.6px;top:407px;width:1.2px;height:22px;background:#d9d9d9;"></div>
<div class="r" style="left:1213.9px;top:407px;width:1.2px;height:22px;background:#d9d9d9;"></div>
<div class="r" style="left:1337.6px;top:407px;width:1.2px;height:22px;background:#d9d9d9;"></div>
<div class="r" style="left:1433.3px;top:407px;width:1.2px;height:22px;background:#d9d9d9;"></div>
<div class="r" style="left:1644.8px;top:407px;width:1.2px;height:22px;background:#d9d9d9;"></div>
<div class="r" style="left:1740.2px;top:407px;width:1.2px;height:22px;background:#d9d9d9;"></div>
<div class="r" style="left:1863.5px;top:407px;width:1.2px;height:22px;background:#d9d9d9;"></div>
<div class="t " style="left:948.8px;top:411.2px;font-size:13.1px;color:#666666;">Nombre del s...</div>
<svg class="s" style="left:1045.5px;top:413.8px;" width="14.5" height="8" viewBox="0 0 14.5 8"><path d="M1 1L7.25 7L13.5 1" fill="none" stroke="#7a7a7a" stroke-width="1"/></svg>
<div class="t " style="left:1071.7px;top:411.2px;font-size:13.1px;color:#666666;">Origen</div>
<svg class="s" style="left:1116.7px;top:413.8px;" width="14.5" height="8" viewBox="0 0 14.5 8"><path d="M1 1L7.25 7L13.5 1" fill="none" stroke="#7a7a7a" stroke-width="1"/></svg>
<div class="t " style="left:1222.8px;top:411.2px;font-size:13.1px;color:#666666;">Precio por un...</div>
<svg class="s" style="left:1318.4px;top:413.8px;" width="14.5" height="8" viewBox="0 0 14.5 8"><path d="M1 1L7.25 7L13.5 1" fill="none" stroke="#7a7a7a" stroke-width="1"/></svg>
<div class="t " style="left:1346.7px;top:411.2px;font-size:13.1px;color:#666666;">Cantidad</div>
<svg class="s" style="left:1404.5px;top:413.8px;" width="14.5" height="8" viewBox="0 0 14.5 8"><path d="M1 1L7.25 7L13.5 1" fill="none" stroke="#7a7a7a" stroke-width="1"/></svg>
<div class="t " style="left:1442.4px;top:411.2px;font-size:13.1px;color:#666666;">Duración Facturada</div>
<svg class="s" style="left:1560px;top:413.8px;" width="14.5" height="8" viewBox="0 0 14.5 8"><path d="M1 1L7.25 7L13.5 1" fill="none" stroke="#7a7a7a" stroke-width="1"/></svg>
<div class="t " style="left:1653.9px;top:411.2px;font-size:13.1px;color:#666666;">Descuento</div>
<svg class="s" style="left:1720.7px;top:413.8px;" width="14.5" height="8" viewBox="0 0 14.5 8"><path d="M1 1L7.25 7L13.5 1" fill="none" stroke="#7a7a7a" stroke-width="1"/></svg>
<div class="t " style="left:1749.4px;top:411.2px;font-size:13.1px;color:#666666;">Importe</div>
<svg class="s" style="left:1801.6px;top:413.8px;" width="14.5" height="8" viewBox="0 0 14.5 8"><path d="M1 1L7.25 7L13.5 1" fill="none" stroke="#7a7a7a" stroke-width="1"/></svg>
<div class="t " style="left:1872.8px;top:411.2px;font-size:13.1px;color:#666666;">Equipo(s)</div>
<div class="r" style="left:890px;top:438.5px;width:1100px;height:1.5px;background:#dadada;"></div>
<div class="r" style="left:912px;top:440.5px;width:1100px;height:41.5px;background:#c6c6c6;"></div>
<div class="r" style="left:1434px;top:440.5px;width:211px;height:43.5px;border:1px solid #8c8c8c;background:#c6c6c6"></div>
<svg class="s" style="left:919px;top:455px;" width="24" height="14" viewBox="0 0 24 14"><path d="M2.5 3L7 7L2.5 11" fill="none" stroke="#111" stroke-width="1.6"/><path d="M12 4.5L15.5 8.5L19 4.5" fill="none" stroke="#111" stroke-width="1.6"/></svg>
<svg class="s" style="left:952px;top:454px;" width="12" height="14" viewBox="0 0 12 14"><path d="M3 6.5V4.5A3 3 0 0 1 9 4.5V6.5" fill="none" stroke="#000" stroke-width="1.9"/><rect x="0.8" y="6" width="10.4" height="7.8" rx="1" fill="#000"/><rect x="5.3" y="8.5" width="1.6" height="3" fill="#c6c6c6"/></svg>
<div class="t " style="left:968.7px;top:454.2px;font-size:16.2px;color:#1a1a1a;letter-spacing:-0.15px;">Servicios ...</div>
<svg class="s" style="left:1076px;top:454px;" width="12" height="14" viewBox="0 0 12 14"><path d="M3 6.5V4.5A3 3 0 0 1 9 4.5V6.5" fill="none" stroke="#000" stroke-width="1.9"/><rect x="0.8" y="6" width="10.4" height="7.8" rx="1" fill="#000"/><rect x="5.3" y="8.5" width="1.6" height="3" fill="#c6c6c6"/></svg>
<div class="t " style="left:1092.0px;top:454.5px;font-size:16.6px;color:#1a1a1a;letter-spacing:-0.1px;">Contrato</div>
<svg class="s" style="left:1258px;top:454px;" width="12" height="14" viewBox="0 0 12 14"><path d="M3 6.5V4.5A3 3 0 0 1 9 4.5V6.5" fill="none" stroke="#000" stroke-width="1.9"/><rect x="0.8" y="6" width="10.4" height="7.8" rx="1" fill="#000"/><rect x="5.3" y="8.5" width="1.6" height="3" fill="#c6c6c6"/></svg>
<div class="t " style="left:1273.8px;top:454.8px;font-size:16px;color:#1a1a1a;">80,00 €</div>
<div class="t " style="left:1362.2px;top:454.8px;font-size:16px;color:#1f3a66;letter-spacing:-0.1px;">1,00000</div>
<div class="r" style="left:1421px;top:457px;width:7px;height:7px;border-radius:50%;background:#c4906e"></div>
<svg class="s" style="left:1597px;top:454px;" width="12" height="14" viewBox="0 0 12 14"><path d="M3 6.5V4.5A3 3 0 0 1 9 4.5V6.5" fill="none" stroke="#000" stroke-width="1.9"/><rect x="0.8" y="6" width="10.4" height="7.8" rx="1" fill="#000"/><rect x="5.3" y="8.5" width="1.6" height="3" fill="#c6c6c6"/></svg>
<div class="t " style="left:1614.0px;top:454.8px;font-size:16px;color:#1a1a1a;letter-spacing:1.3px;">---</div>
<div class="t " style="left:1710.8px;top:454.8px;font-size:16px;color:#1a1a1a;letter-spacing:1.3px;">---</div>
<svg class="s" style="left:1784px;top:454px;" width="12" height="14" viewBox="0 0 12 14"><path d="M3 6.5V4.5A3 3 0 0 1 9 4.5V6.5" fill="none" stroke="#000" stroke-width="1.9"/><rect x="0.8" y="6" width="10.4" height="7.8" rx="1" fill="#000"/><rect x="5.3" y="8.5" width="1.6" height="3" fill="#c6c6c6"/></svg>
<div class="t " style="left:1800.4px;top:454.8px;font-size:16px;color:#1a1a1a;">80,00 €</div>
<svg class="s" style="left:1876.7px;top:454px;" width="12" height="14" viewBox="0 0 12 14"><path d="M3 6.5V4.5A3 3 0 0 1 9 4.5V6.5" fill="none" stroke="#000" stroke-width="1.9"/><rect x="0.8" y="6" width="10.4" height="7.8" rx="1" fill="#000"/><rect x="5.3" y="8.5" width="1.6" height="3" fill="#c6c6c6"/></svg>
<div class="t " style="left:1894.0px;top:454.8px;font-size:16px;color:#1a1a1a;letter-spacing:1.3px;">---</div>
<div class="r" style="left:896.5px;top:491.5px;width:1100px;height:6.5px;background:#c4c4c4;border-radius:3px;"></div>
<div class="r" style="left:890px;top:504.5px;width:1100px;height:44.5px;background:#f3f3f3;"></div>
<svg class="s" style="left:1845px;top:516px;" width="18" height="16" viewBox="0 0 18 16"><path d="M1.5 1V14" stroke="#9a9a9a" stroke-width="1.2"/><path d="M4 7.5H16M9.5 2L4 7.5L9.5 13" fill="none" stroke="#9a9a9a" stroke-width="1.2"/></svg>
<svg class="s" style="left:1889px;top:516px;" width="18" height="16" viewBox="0 0 18 16"><path d="M2 7.5H16M7.5 2L2 7.5L7.5 13" fill="none" stroke="#9a9a9a" stroke-width="1.2"/></svg>
<div class="t " style="left:891.7px;top:579.3px;font-size:15px;font-weight:700;color:#3d3d3d;letter-spacing:-0.3px;">Líneas de suplido</div>
<svg class="s" style="left:1776.5px;top:579.2px;" width="16" height="16" viewBox="0 0 16 16"><path d="M8 0.5V15.5M0.5 8H15.5" stroke="#4f7399" stroke-width="1.2"/></svg>
<div class="t " style="left:1810.3px;top:581.3px;font-size:15px;color:#323232;">Crear Línea de Suplido</div>
<div class="r" style="left:891px;top:610px;width:1100px;height:1px;background:#dcdcdc;"></div>
<div class="t " style="left:975.0px;top:627.3px;font-size:15px;font-weight:700;color:#3d3d3d;letter-spacing:0.15px;">Nº Suplido</div>
<div class="t " style="left:1203.9px;top:627.3px;font-size:15px;font-weight:700;color:#3d3d3d;letter-spacing:-0.25px;">Concepto</div>
<div class="t " style="left:1396.6px;top:627.3px;font-size:15px;font-weight:700;color:#3d3d3d;letter-spacing:-0.25px;">Fecha alta</div>
<div class="t " style="left:1684.0px;top:627.3px;font-size:15px;font-weight:700;color:#3d3d3d;letter-spacing:0.3px;">Importe</div>
<div class="t " style="left:1781.2px;top:627.3px;font-size:15px;font-weight:700;color:#3d3d3d;letter-spacing:-0.25px;">Suplido</div>
<div class="r" style="left:912px;top:656.5px;width:1100px;height:1px;background:#dcdcdc;"></div>
<svg class="s" style="left:1410px;top:675.5px;" width="112" height="112" viewBox="0 0 112 112"><circle cx="56" cy="56" r="55.8" fill="#c2c2c2"/><rect x="20" y="24.6" width="72.3" height="59" rx="6" fill="#fff"/><path d="M44.8 24V84M68.4 24V84M19 45H93M19 64.5H93" stroke="#c2c2c2" stroke-width="2.6"/></svg>
<div class="t " style="left:1332.0px;top:790.3px;font-size:15px;color:#323232;letter-spacing:0.2px;">No se encontró nada para mostrar aquí</div>
<div class="r" style="left:912px;top:832.5px;width:1100px;height:1px;background:#dcdcdc;"></div>
<div class="t " style="left:912.9px;top:853.2px;font-size:14.2px;color:#424242;">Filas: 0</div>
<svg class="s" style="left:1058px;top:627.5px;" width="8" height="14" viewBox="0 0 8 14"><path d="M4 13V1.5M1 4.5L4 1.5L7 4.5" fill="none" stroke="#444" stroke-width="1.2"/></svg>
<svg class="s" style="left:1072.5px;top:632px;" width="11" height="7" viewBox="0 0 11 7"><path d="M1 1.2L5 5L9 1.2" fill="none" stroke="#555" stroke-width="1.2"/></svg>
<svg class="s" style="left:1276.3px;top:632px;" width="11" height="7" viewBox="0 0 11 7"><path d="M1 1.2L5 5L9 1.2" fill="none" stroke="#555" stroke-width="1.2"/></svg>
<svg class="s" style="left:1471px;top:632px;" width="11" height="7" viewBox="0 0 11 7"><path d="M1 1.2L5 5L9 1.2" fill="none" stroke="#555" stroke-width="1.2"/></svg>
<svg class="s" style="left:1746px;top:632px;" width="11" height="7" viewBox="0 0 11 7"><path d="M1 1.2L5 5L9 1.2" fill="none" stroke="#555" stroke-width="1.2"/></svg>
<svg class="s" style="left:1840px;top:632px;" width="11" height="7" viewBox="0 0 11 7"><path d="M1 1.2L5 5L9 1.2" fill="none" stroke="#555" stroke-width="1.2"/></svg>
<div class="t " style="left:891.7px;top:915.3px;font-size:15px;font-weight:700;color:#3d3d3d;letter-spacing:-0.3px;">Linea de Pagos a Cuenta</div>
<svg class="s" style="left:1776.5px;top:914.0px;" width="16" height="16" viewBox="0 0 16 16"><path d="M8 0.5V15.5M0.5 8H15.5" stroke="#4f7399" stroke-width="1.2"/></svg>
<div class="t " style="left:1810.3px;top:915.3px;font-size:15px;color:#323232;">Crear Linea de Pago a cuenta</div>
<div class="r" style="left:891px;top:945px;width:1100px;height:1px;background:#dcdcdc;"></div>
<div class="t " style="left:975.0px;top:963.3px;font-size:15px;font-weight:700;color:#3d3d3d;letter-spacing:0.15px;">Nº pago a cuenta</div>
<div class="t " style="left:1184.0px;top:963.3px;font-size:15px;font-weight:700;color:#3d3d3d;letter-spacing:-0.25px;">Concepto</div>
<div class="t " style="left:1393.2px;top:963.3px;font-size:15px;font-weight:700;color:#3d3d3d;letter-spacing:-0.25px;">Fecha alta</div>
<div class="t " style="left:1714.0px;top:963.3px;font-size:15px;font-weight:700;color:#3d3d3d;letter-spacing:0.3px;">Importe</div>
<div class="t " style="left:1811.0px;top:963.3px;font-size:15px;font-weight:700;color:#3d3d3d;letter-spacing:-0.25px;">Pago a cuenta</div>
<div class="r" style="left:912px;top:992px;width:1100px;height:1px;background:#dcdcdc;"></div>
<svg class="s" style="left:1410px;top:1010px;" width="112" height="112" viewBox="0 0 112 112"><circle cx="56" cy="56" r="55.8" fill="#c2c2c2"/><rect x="20" y="24.6" width="72.3" height="59" rx="6" fill="#fff"/><path d="M44.8 24V84M68.4 24V84M19 45H93M19 64.5H93" stroke="#c2c2c2" stroke-width="2.6"/></svg>
<svg class="s" style="left:1105px;top:963px;" width="8" height="14" viewBox="0 0 8 14"><path d="M4 13V1.5M1 4.5L4 1.5L7 4.5" fill="none" stroke="#444" stroke-width="1.2"/></svg>
<svg class="s" style="left:1118px;top:967.5px;" width="11" height="7" viewBox="0 0 11 7"><path d="M1 1.2L5 5L9 1.2" fill="none" stroke="#555" stroke-width="1.2"/></svg>
<svg class="s" style="left:1256px;top:967.5px;" width="11" height="7" viewBox="0 0 11 7"><path d="M1 1.2L5 5L9 1.2" fill="none" stroke="#555" stroke-width="1.2"/></svg>
<svg class="s" style="left:1468px;top:967.5px;" width="11" height="7" viewBox="0 0 11 7"><path d="M1 1.2L5 5L9 1.2" fill="none" stroke="#555" stroke-width="1.2"/></svg>
<svg class="s" style="left:1776px;top:967.5px;" width="11" height="7" viewBox="0 0 11 7"><path d="M1 1.2L5 5L9 1.2" fill="none" stroke="#555" stroke-width="1.2"/></svg>
<svg class="s" style="left:1913px;top:967.5px;" width="11" height="7" viewBox="0 0 11 7"><path d="M1 1.2L5 5L9 1.2" fill="none" stroke="#555" stroke-width="1.2"/></svg></div></body></html>
